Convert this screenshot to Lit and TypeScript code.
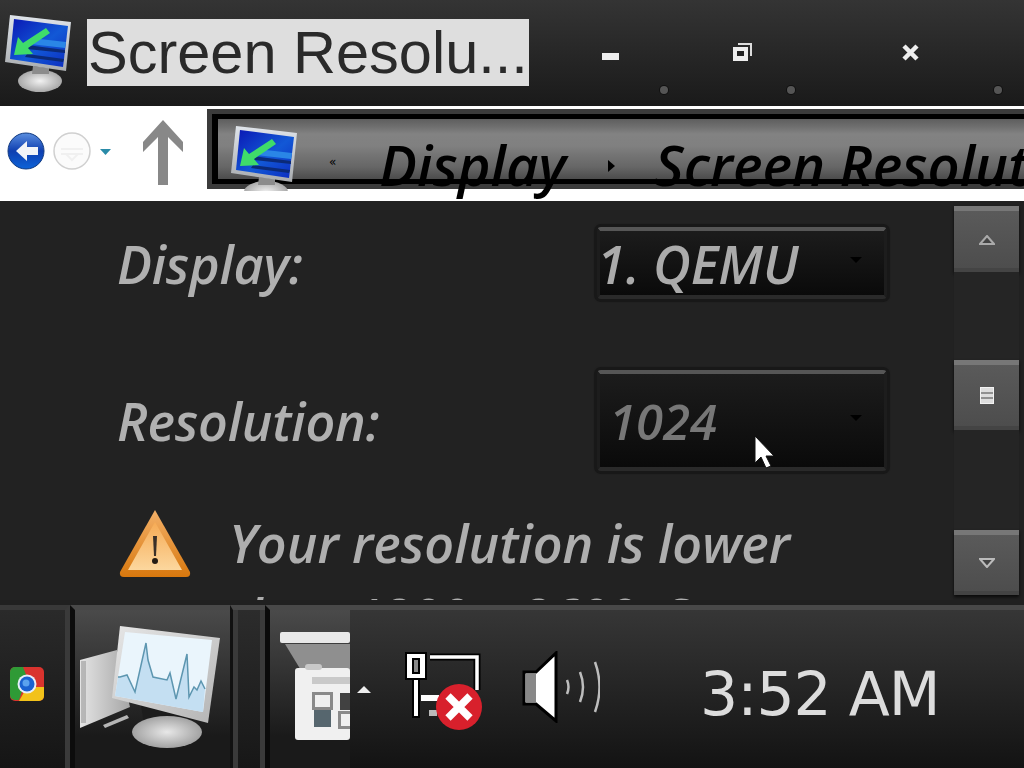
import { LitElement, html, css } from "lit";
import { customElement } from "lit/decorators.js";

const monitor = html`<svg class="mon" viewBox="0 0 70 80">
  <defs>
    <linearGradient id="scr" x1="0" y1="0" x2="1" y2="1"><stop offset="0" stop-color="#0a17b4"/><stop offset=".55" stop-color="#1258d6"/><stop offset="1" stop-color="#0c2cc0"/></linearGradient>
    <linearGradient id="fr" x1="0" y1="0" x2="0" y2="1"><stop offset="0" stop-color="#dfe4ea"/><stop offset="1" stop-color="#a9acaf"/></linearGradient>
    <radialGradient id="st"><stop offset="0" stop-color="#f2f2f2"/><stop offset="1" stop-color="#a8a8a8"/></radialGradient>
  </defs>
  <ellipse cx="35" cy="67" rx="22" ry="11" fill="url(#st)"/>
  <polygon points="28,52 44,54 44,60 27,60" fill="#8c8c8c"/>
  <polygon points="5,1 66,8 61,57 0,48" fill="url(#fr)"/>
  <polygon points="9,5 63,12 58,53 5,45" fill="url(#scr)"/>
  <polygon points="26,24 61,28 60,34 25,30" fill="#2a86e6"/>
  <polygon points="22,31 60,36 60,39 22,35" fill="#0b2a78"/>
  <polygon points="22,40 59,45 58,48 20,43" fill="#0b2a78"/>
  <polygon points="9,41 13,23 18,29 41,14 45,19 23,34 28,40" fill="#3fdc6a"/>
</svg>`;

@customElement("app-root")
export class AppRoot extends LitElement {
  static styles = css`
    :host { display: flex; flex-direction: column; width: 1024px; height: 768px; overflow: hidden; background: #222; position: relative; font-family: "Open Sans", sans-serif; }
    svg { display: block; flex: none; }

    .title { flex: none; height: 106px; display: flex; align-items: flex-start; background: linear-gradient(#343434, #1a1a1a); box-sizing: border-box; }
    .title .mon { width: 70px; height: 80px; margin: 14px 0 0 5px; }
    .cap { flex: none; width: 442px; height: 67px; margin: 19px 0 0 12px; background: #dedede; color: #2a2a2a; font: 59.5px/67px "Liberation Sans", sans-serif; box-sizing: border-box; padding-left: 1px; white-space: nowrap; overflow: hidden; }
    .btn { flex: none; position: relative; height: 106px; }
    .b1 { width: 135px; } .b2 { width: 127px; } .b3 { width: 207px; }
    .b1 svg { margin: 53px 0 0 73px; }
    .b2 svg { margin: 43px 0 0 69px; }
    .b3 svg { margin: 44px 0 0 111px; }
    .riv { position: absolute; right: -4px; top: 86px; width: 8px; height: 8px; border-radius: 50%; background: #555; box-shadow: 0 0 0 1px #111; }

    .tool { flex: none; height: 95px; background: #fff; display: flex; align-items: flex-start; }
    .nav { flex: none; width: 207px; height: 95px; position: relative; }
    .nav svg { position: absolute; left: 0; top: 0; }
    .crumb { flex: 1; min-width: 0; margin-top: 3px; height: 80px; background: #3b3b3b; padding: 5px 0 0 5px; box-sizing: border-box; }
    .crumb-in { height: 70px; border-top: 5px solid #000; border-bottom: 5px solid #000; border-left: 6px solid #000; box-sizing: border-box; background: linear-gradient(#5e5e5e 0, #6e6e6e 12%, #828282 25%, #808080 45%, #747474 60%, #666 80%, #4c4c4c 100%); display: flex; align-items: flex-start; white-space: nowrap; overflow: visible; }
    .crumb-in .mon { width: 70px; height: 80px; margin: 6px 0 0 13px; clip-path: inset(0 0 14px 0); }
    .txt { font-weight: 600; font-style: italic; font-size: 56px; line-height: 60px; color: #000; margin-top: 15px; flex: none; }
    .chev { font: 12px "DejaVu Sans", sans-serif; color: #000; margin: 36px 43px 0 28px; line-height: 14px; flex: none; }
    .tri { flex: none; width: 0; height: 0; border-left: 7px solid #000; border-top: 6px solid transparent; border-bottom: 6px solid transparent; margin: 41px 40px 0 42px; }

    .content { flex: none; height: 399px; display: flex; overflow: hidden; background: #222; }
    .main { flex: none; width: 953px; box-sizing: border-box; padding: 25px 0 0 117px; color: #b0b0b0; font-style: italic; font-size: 52px; font-weight: 600; }
    .row { display: flex; align-items: center; }
    .row .lab { flex: none; width: 479px; letter-spacing: -0.2px; }
    .r1 { height: 74px; margin-bottom: 69px; }
    .r2 { height: 103px; margin-bottom: 36px; }
    .sel { flex: none; width: 292px; box-sizing: border-box; height: 100%; border: 4px solid #1d1d1d; border-radius: 5px; box-shadow: 0 0 3px #111; background: linear-gradient(#1c1c1c, #0a0a0a); border-top: 5px solid #565656; border-bottom: 5px solid #2a2a2a; outline: 3px solid #181818; outline-offset: -1px; display: flex; align-items: center; justify-content: space-between; overflow: hidden; position: relative; white-space: nowrap; }
    .sel i { width: 0; height: 0; border-left: 6px solid transparent; border-right: 6px solid transparent; border-top: 6px solid #000; margin: -6px 22px 0 0; flex: none; }
    .s1 span { color: #ababab; margin-left: -3px; }
    .s2 span { color: #777; margin-left: 9px; font-size: 49px; }
    .warn { display: flex; align-items: flex-start; }
    .warn svg { margin: 0 37px 0 1px; }
    .warn p { margin: -2px 0 0 0; width: 620px; line-height: 74px; color: #aeaeae; }

    .bar { flex: none; width: 71px; padding: 5px 5px 0 1px; box-sizing: border-box; display: flex; flex-direction: column; background: #212121; }
    .sb { flex: none; background: linear-gradient(#5a5a5a, #4d4d4d); border-top: 5px solid #777; border-bottom: 4px solid #444; box-sizing: border-box; display: flex; align-items: center; justify-content: center; box-shadow: 0 2px 3px #0a0a0a; }
    .tr { flex: none; background: #252525; }
    .h66 { height: 66px; } .h88 { height: 88px; } .h70 { height: 70px; } .h100 { height: 100px; } .h65 { height: 65px; }

    .task { flex: 1; display: flex; border-top: 5px solid #202020; min-height: 0; }
    .tasks { flex: none; width: 350px; display: flex; overflow: hidden; }
    .tk { flex: none; box-sizing: border-box; border-top: 5px solid #484848; background: linear-gradient(#303030, #141414); position: relative; overflow: hidden; }
    .t1 { width: 70px; display: flex; align-items: center; border-right: 5px solid #3a3a3a; background: linear-gradient(#2a2a2a, #151515); border-top-color: #383838; padding-left: 10px; }
    .t1 svg { margin-top: -10px; }
    .t2 { width: 160px; border-left: 5px solid #0c0c0c; background: linear-gradient(#4a4a4a, #1a1a1a 80%); }
    .t2 svg { margin: 15px 0 0 3px; }
    .t3 { width: 35px; border-left: 3px solid #111; background: linear-gradient(#2c2c2c, #171717); }
    .t3 div { height: 100%; box-sizing: border-box; border-left: 5px solid #3a3a3a; border-right: 5px solid #3a3a3a; }
    .t4 { flex: 1; border-left: 5px solid #0a0a0a; background: linear-gradient(#4a4a4a, #1a1a1a 80%); }
    .t4 svg { margin: 22px 0 0 10px; }
    .tray { flex: 1; display: flex; align-items: center; border-top: 5px solid #484848; background: linear-gradient(#363636, #131313); min-width: 0; }
    .tray .up { margin: 0 32px 0 7px; }
    .tray .net { margin: 2px 40px 0 0; }
    .tray .vol { margin: -4px 0 0 0; }
    .clock { font: 60px/1 "DejaVu Sans", sans-serif; color: #dcdcdc; margin: 10px 0 0 100px; white-space: nowrap; letter-spacing: -1px; }

    .cur { position: absolute; left: 754px; top: 435px; }
  `;

  render() {
    return html`
      <div class="title">
        ${monitor}
        <div class="cap">Screen Resolu...</div>
        <div class="btn b1"><svg width="17" height="7"><rect width="17" height="7" fill="#eee"/></svg><span class="riv"></span></div>
        <div class="btn b2"><svg width="19" height="18" viewBox="0 0 19 18"><path d="M5 1h13v12" fill="none" stroke="#ddd" stroke-width="2"/><rect x="0" y="4" width="15" height="14" fill="#eee"/><rect x="4" y="8" width="7" height="5" fill="#222"/></svg><span class="riv"></span></div>
        <div class="btn b3"><svg width="17" height="17" viewBox="0 0 17 17"><path d="M2 2l13 13M15 2L2 15" stroke="#eee" stroke-width="4.500"/></svg><span class="riv"></span></div>
      </div>

      <div class="tool">
        <div class="nav">
          <svg width="207" height="95" viewBox="0 0 207 95">
            <defs>
              <linearGradient id="bk" x1="0" y1="0" x2="0" y2="1"><stop offset="0" stop-color="#5b8fe0"/><stop offset=".5" stop-color="#0f3fb0"/><stop offset="1" stop-color="#0d63d8"/></linearGradient>
            </defs>
            <circle cx="26" cy="45" r="18" fill="url(#bk)" stroke="#113a80"/>
            <path d="M16 45l11-10v6h11v8H27v6z" fill="#f2f4f8"/>
            <circle cx="72" cy="45" r="18" fill="#fbfbfb" stroke="#d0d0d0" stroke-width="1.5"/>
            <path d="M61 43h22M61 48h22M72 54l6-6H66z" fill="none" stroke="#f0f0f0" stroke-width="2"/>
            <path d="M100 43h11l-5.500 6z" fill="#2a8ba8"/>
            <path d="M163 14l20 22v10l-15-15v48h-10V31l-15 15V36z" fill="#888"/>
          </svg>
        </div>
        <div class="crumb">
          <div class="crumb-in">
            ${monitor}
            <span class="chev">«</span>
            <span class="txt">Display</span>
            <span class="tri"></span>
            <span class="txt">Screen Resolution</span>
          </div>
        </div>
      </div>

      <div class="content">
        <div class="main">
          <div class="row r1"><span class="lab">Display:</span><div class="sel s1"><span>1. QEMU</span><i></i></div></div>
          <div class="row r2"><span class="lab">Resolution:</span><div class="sel s2"><span>1024</span><i></i></div></div>
          <div class="warn">
            <svg width="74" height="72" viewBox="0 0 74 72">
              <defs>
                <linearGradient id="wg" x1="0" y1="0" x2="0" y2="1"><stop offset="0" stop-color="#f6ab55"/><stop offset="1" stop-color="#fcd79e"/></linearGradient>
                <linearGradient id="wb" x1="0" y1="0" x2="0" y2="1"><stop offset="0" stop-color="#f3b068"/><stop offset="1" stop-color="#d8780e"/></linearGradient>
              </defs>
              <path d="M37 2L72 64q1 5-4 5H6q-5 0-4-5z" fill="url(#wb)"/>
              <path d="M37 14L64 62H10z" fill="url(#wg)"/>
              <path d="M35 28h4l-1 20h-2z" fill="#3a3028"/><circle cx="37" cy="53" r="3" fill="#241c14"/>
            </svg>
            <p>Your resolution is lower than 1200 x 2600. Some</p>
          </div>
        </div>
        <div class="bar">
          <div class="sb h66"><svg width="16" height="10" viewBox="0 0 16 10"><path d="M8 1l7 8H1z" fill="#444" stroke="#aaa" stroke-width="2"/></svg></div>
          <div class="tr h88"></div>
          <div class="sb h70"><svg width="14" height="17" viewBox="0 0 14 17"><rect x=".5" y=".5" width="13" height="16" fill="#ddd" stroke="#f2f2f2"/><path d="M1 6h12M1 11h12" stroke="#777" stroke-width="1.500"/></svg></div>
          <div class="tr h100"></div>
          <div class="sb h65"><svg width="16" height="10" viewBox="0 0 16 10"><path d="M8 9L1 1h14z" fill="#444" stroke="#bbb" stroke-width="2"/></svg></div>
        </div>
      </div>

      <div class="task">
        <div class="tasks">
          <div class="tk t1">
            <svg width="34" height="34" viewBox="0 0 34 34">
              <rect width="34" height="34" rx="5" fill="#d9332e"/>
              <path d="M0 5a5 5 0 015-5h8L17 10 9 33H5a5 5 0 01-5-5z" fill="#2f9a36"/>
              <path d="M17 20h17v9a5 5 0 01-5 5H9z" fill="#f2c21a"/>
              <circle cx="17" cy="17" r="9.500" fill="#e8eef8"/><circle cx="17" cy="17" r="7.500" fill="#1a62d0"/><circle cx="16" cy="16" r="3.500" fill="#5aa2ee"/>
            </svg>
          </div>
          <div class="tk t2">
            <svg width="145" height="125" viewBox="0 0 145 125">
              <defs>
                <linearGradient id="cas" x1="0" y1="0" x2="1" y2="0"><stop offset="0" stop-color="#e4e4e4"/><stop offset="1" stop-color="#a6a6a6"/></linearGradient>
                <linearGradient id="fr2" x1="0" y1="0" x2="1" y2="1"><stop offset="0" stop-color="#e6e6e6"/><stop offset="1" stop-color="#b4b4b4"/></linearGradient>
                <radialGradient id="st2"><stop offset="0" stop-color="#e8e8e8"/><stop offset="1" stop-color="#a2a2a2"/></radialGradient>
              </defs>
              <polygon points="2,35 39,25 52,82 2,103" fill="url(#cas)"/>
              <rect x="3" y="36" width="5" height="62" fill="#8e8e8e" opacity=".5"/>
              <polygon points="25,100 49,90 51,93 27,103" fill="#b5b5b5"/>
              <polygon points="62,75 118,92 112,100 66,98" fill="#1c1c1c"/>
              <ellipse cx="89" cy="107" rx="35" ry="16" fill="url(#st2)"/>
              <polygon points="42,1 142,13 130,98 34,73" fill="url(#fr2)"/>
              <polygon points="47,7 134,15 125,87 37,71" fill="#eaf5fc"/>
              <path d="M40 52L42 52 49 50 57 67 68 18 70 35 75 52 89 55 92 48 98 74 109 29 111 72 116 62 119 65 123 56 127 64 125 87 37 71z" fill="#c4dff2"/>
              <path d="M40 52L42 52 49 50 57 67 68 18 70 35 75 52 89 55 92 48 98 74 109 29 111 72 116 62 119 65 123 56 127 64" fill="none" stroke="#5d96b0" stroke-width="1.500"/>
            </svg>
          </div>
          <div class="tk t3"><div></div></div>
          <div class="tk t4">
            <svg width="70" height="110" viewBox="0 0 70 110">
              <polygon points="5,12 70,12 70,40 22,40" fill="#8f8f8f"/>
              <rect x="0" y="0" width="70" height="11" rx="2" fill="#e8e8e8"/>
              <rect x="15" y="36" width="55" height="72" rx="3" fill="#f0f0f0"/>
              <rect x="25" y="32" width="17" height="6" rx="3" fill="#c8c8c8"/>
              <rect x="32" y="45" width="38" height="7" fill="#c9c9c9"/>
              <rect x="33.500" y="61.500" width="18" height="15" fill="#f0f0f0" stroke="#8a8a8a" stroke-width="3"/>
              <rect x="60" y="61" width="10" height="17" fill="#414141"/>
              <rect x="34" y="78" width="17" height="17" fill="#56666e"/>
              <rect x="59.500" y="80.500" width="14" height="15" fill="#f0f0f0" stroke="#8a8a8a" stroke-width="3"/>
            </svg>
          </div>
        </div>
        <div class="tray">
          <svg class="up" width="14" height="7"><path d="M7 0l7 7H0z" fill="#eee"/></svg>
          <svg class="net" width="79" height="81" viewBox="0 0 79 81">
            <path d="M27 7h47v33" fill="none" stroke="#000" stroke-width="7"/>
            <path d="M27 7h47v33" fill="none" stroke="#fff" stroke-width="3.500"/>
            <path d="M10 29h6v38h-6z" fill="#fff" stroke="#000" stroke-width="2"/>
            <path d="M3 3h20v26H3z" fill="#fff" stroke="#000" stroke-width="2"/>
            <rect x="9" y="8" width="8" height="16" fill="#000"/><rect x="11" y="10" width="4" height="12" fill="#888"/>
            <rect x="18" y="45" width="18" height="6" fill="#fff"/><rect x="26" y="60" width="8" height="6" fill="#bbb"/>
            <circle cx="56" cy="57" r="23" fill="#d8202c"/>
            <path d="M45 46l22 22M67 46L45 68" stroke="#fff" stroke-width="7.500"/>
          </svg>
          <svg class="vol" width="78" height="72" viewBox="0 0 78 72">
            <path d="M2 21h12L34 2v68L14 53H2z" fill="#fff" stroke="#000" stroke-width="3"/>
            <rect x="4" y="23" width="10" height="28" fill="#888"/>
            <path d="M45 29q3 7 0 14M58 21q6 15 0 30M73 11q9 25 0 50" fill="none" stroke="#bdbdbd" stroke-width="2.500"/>
          </svg>
          <span class="clock">3:52 AM</span>
        </div>
      </div>

      <svg class="cur" width="22" height="34" viewBox="0 0 22 34"><path d="M1 1v27l6-6 5 11 5-2-5-10h8z" fill="#fff" stroke="#111" stroke-width="1"/></svg>
    `;
  }
}
